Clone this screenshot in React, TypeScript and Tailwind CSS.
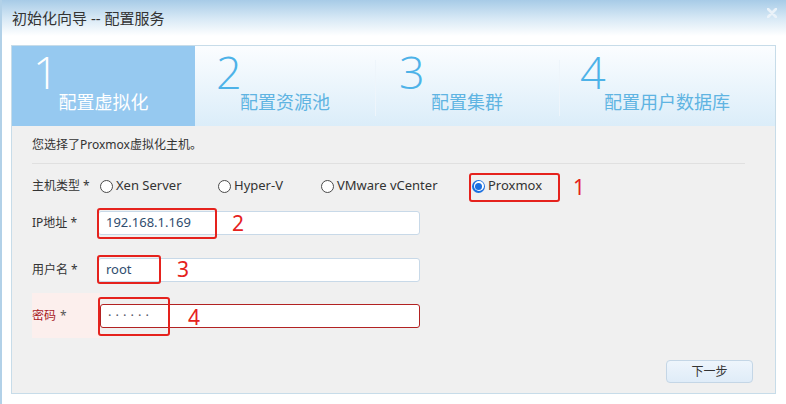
import React from "react";

const font = { fontFamily: '"Segoe UI", "Noto Sans", "Noto Sans CJK SC", sans-serif' };

const steps = [
  { n: "1", label: "配置虚拟化", w: "w-[183px]", active: true },
  { n: "2", label: "配置资源池", w: "w-[180px]", active: false },
  { n: "3", label: "配置集群", w: "w-[184px]", active: false },
  { n: "4", label: "配置用户数据库", w: "flex-1", active: false },
];

function Radio({ checked }: { checked?: boolean }) {
  if (checked) {
    return (
      <span className="flex h-[13px] w-[13px] items-center justify-center rounded-full bg-[#1a6fe0]">
        <span className="flex h-[10px] w-[10px] items-center justify-center rounded-full bg-white">
          <span className="h-[7px] w-[7px] rounded-full bg-[#1a6fe0]" />
        </span>
      </span>
    );
  }
  return <span className="h-[13px] w-[13px] rounded-full border border-[#4a4a4a] bg-white" />;
}

function Mark({ className, n, numClass }: { className: string; n: string; numClass: string }) {
  return (
    <>
      <div className={`absolute rounded-[3px] border-2 border-[#e5221d] ${className}`} />
      <div className={`absolute text-[21px] leading-none text-[#e5221d] ${numClass}`}>{n}</div>
    </>
  );
}

export default function App() {
  const radios = [
    { label: "Xen Server", w: "w-[118px]" },
    { label: "Hyper-V", w: "w-[103px]" },
    { label: "VMware vCenter", w: "w-[151px]" },
    { label: "Proxmox", w: "w-[90px]", checked: true },
  ];

  return (
    <div
      className="relative flex h-[404px] w-[786px] flex-col overflow-hidden border-l-2 border-[#b2d1e8] bg-white text-[#333]"
      style={font}
    >
      {/* title bar */}
      <div className="flex h-[36px] shrink-0 items-center justify-between bg-gradient-to-b from-[#a7cbe7] via-[#d6e8f5] to-[#ffffff] pl-[10px] pr-[9px]">
        <span className="text-[15px] text-[#333]">初始化向导 -- 配置服务</span>
        <svg width="10" height="10" viewBox="0 0 10 10" className="mb-[10px]">
          <path d="M1 1 L9 9 M9 1 L1 9" stroke="#eaf2f9" strokeWidth="2.6" strokeLinecap="round" />
        </svg>
      </div>

      <div className="ml-[9px] mt-[9px] flex h-[349px] w-[765px] flex-col border border-[#c7dce9]">
        {/* steps */}
        <div className="flex h-[80px] shrink-0 bg-gradient-to-b from-[#fbfdff] to-[#dbedf9]">
          {steps.map((s, i) => (
            <div
              key={s.n}
              className={`relative flex ${s.w} ${s.active ? "bg-[#96c9f0]" : ""}`}
            >
              {i > 1 && (
                <div className="absolute left-0 top-[14px] h-[56px] w-px bg-[#eef5fb]" />
              )}
              <div className="flex w-full flex-col">
                <div
                  className={`pt-[3px] text-[45px] font-light leading-[46px] ${
                    s.active ? "text-white" : "text-[#4db2e8]"
                  } ${s.n === "3" ? "pl-[24px]" : "pl-[21px]"}`}
                  style={{ fontFamily: '"Open Sans", "Noto Sans", sans-serif' }}
                >
                  {s.n}
                </div>
                <div
                  className={`-mt-[5px] text-center text-[18px] leading-[24px] ${
                    s.active ? "text-white" : "text-[#5fb4e2]"
                  }`}
                >
                  {s.label}
                </div>
              </div>
            </div>
          ))}
        </div>

        {/* body */}
        <div className="relative flex flex-1 flex-col bg-[#f0f0f0] pl-[20px] pr-[30px] text-[12px]">
          <div className="pt-[10px] leading-[18px]">您选择了Proxmox虚拟化主机。</div>
          <div className="mt-[9px] h-px bg-[#e0e0e0]" />

          <div className="mt-[8px] flex h-[28px] items-center">
            <div className="w-[68px]">主机类型 *</div>
            {radios.map((r) => (
              <div key={r.label} className={`flex items-center gap-[3px] ${r.w}`}>
                <Radio checked={r.checked} />
                <span className="text-[13px]">{r.label}</span>
              </div>
            ))}
          </div>

          <div className="mt-[11px] flex h-[24px] items-center">
            <div className="w-[66px]">IP地址 *</div>
            <div className="flex h-[24px] w-[322px] items-center rounded-[3px] border border-[#c8d9e8] bg-white pl-[7px] text-[13px] text-[#2f4d6e]">
              192.168.1.169
            </div>
          </div>

          <div className="mt-[23px] flex h-[24px] items-center">
            <div className="w-[66px]">用户名 *</div>
            <div className="flex h-[24px] w-[322px] items-center rounded-[3px] border border-[#c8d9e8] bg-white pl-[7px] text-[13px] text-[#2f4d6e]">
              root
            </div>
          </div>

          <div className="mt-[11px] flex h-[45px] items-center">
            <div className="flex h-[45px] w-[68px] items-center bg-[#fcefed] text-[#a8201f]">
              密码 <span className="ml-[4px] text-[#555]">*</span>
            </div>
            <div className="flex h-[24px] w-[320px] items-center rounded-[3px] border border-[#b22222] bg-white pl-[7px] text-[13px] tracking-[4px] text-[#556]">
              ······
            </div>
          </div>

          <div className="flex-1" />
          <div className="flex justify-end pb-[10px]">
            <button className="mr-[-8px] h-[23px] w-[87px] rounded-[4px] border border-[#c4d6e6] bg-gradient-to-b from-[#eef5fc] to-[#dfecf8] text-[12px] text-[#333]">
              下一步
            </button>
          </div>
        </div>
      </div>

      {/* annotations */}
      <Mark className="left-[467px] top-[173px] h-[29px] w-[91px]" n="1" numClass="left-[571px] top-[177px]" />
      <Mark className="left-[95px] top-[208px] h-[31px] w-[120px]" n="2" numClass="left-[230px] top-[213px]" />
      <Mark className="left-[95px] top-[255px] h-[29px] w-[64px]" n="3" numClass="left-[175px] top-[259px]" />
      <Mark className="left-[96px] top-[297px] h-[39px] w-[72px]" n="4" numClass="left-[186px] top-[307px]" />
    </div>
  );
}
